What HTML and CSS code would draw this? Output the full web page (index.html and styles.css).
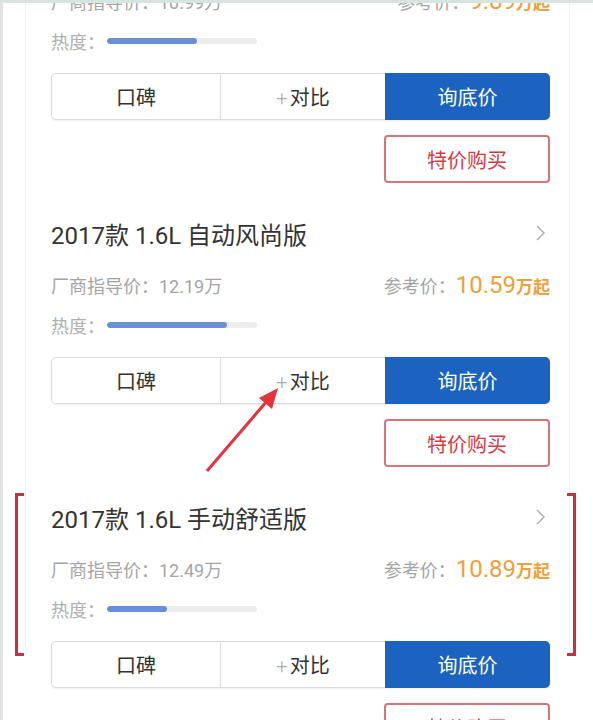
FILE: index.html
```html
<!DOCTYPE html>
<html>
<head>
    <meta charset="UTF-8">
    <meta name="viewport" content="width=device-width, initial-scale=1.0">
    <title>车型列表</title>
    <link rel="stylesheet" href="styles.css">
</head>
<body>
    <div class="page">
        <div class="car-list">
            <div class="car">
                <div class="car-title">
                    <span>2017款 1.6L 手动时尚版</span>
                    <svg class="chevron" width="12" height="18" viewBox="0 0 12 18"><polyline points="2,2 9,9 2,16" /></svg>
                </div>
                <div class="price-row">
                    <span class="guide">厂商指导价：10.99万</span>
                    <span class="ref">参考价：<b>9.89</b><em>万起</em></span>
                </div>
                <div class="heat">
                    <span>热度：</span>
                    <div class="heat-bar"><div class="heat-fill" style="width: 60%"></div></div>
                </div>
                <div class="actions">
                    <button class="act">口碑</button>
                    <button class="act"><i>+</i>对比</button>
                    <button class="act primary">询底价</button>
                </div>
                <button class="special">特价购买</button>
            </div>

            <div class="car">
                <div class="car-title">
                    <span>2017款 1.6L 自动风尚版</span>
                    <svg class="chevron" width="12" height="18" viewBox="0 0 12 18"><polyline points="2,2 9,9 2,16" /></svg>
                </div>
                <div class="price-row">
                    <span class="guide">厂商指导价：12.19万</span>
                    <span class="ref">参考价：<b>10.59</b><em>万起</em></span>
                </div>
                <div class="heat">
                    <span>热度：</span>
                    <div class="heat-bar"><div class="heat-fill" style="width: 80%"></div></div>
                </div>
                <div class="actions">
                    <button class="act">口碑</button>
                    <button class="act"><i>+</i>对比</button>
                    <button class="act primary">询底价</button>
                </div>
                <button class="special">特价购买</button>
                <!-- 指向“对比”的箭头 -->
                <svg class="arrow" width="90" height="95" viewBox="0 0 90 95">
                    <line x1="6" y1="88" x2="66" y2="18" />
                    <polygon points="77,5 71,26 58,15" />
                </svg>
            </div>

            <div class="car">
                <div class="car-title">
                    <span>2017款 1.6L 手动舒适版</span>
                    <svg class="chevron" width="12" height="18" viewBox="0 0 12 18"><polyline points="2,2 9,9 2,16" /></svg>
                </div>
                <div class="price-row">
                    <span class="guide">厂商指导价：12.49万</span>
                    <span class="ref">参考价：<b>10.89</b><em>万起</em></span>
                </div>
                <div class="heat">
                    <span>热度：</span>
                    <div class="heat-bar"><div class="heat-fill" style="width: 40%"></div></div>
                </div>
                <div class="actions">
                    <button class="act">口碑</button>
                    <button class="act"><i>+</i>对比</button>
                    <button class="act primary">询底价</button>
                </div>
                <button class="special">特价购买</button>
                <div class="bracket left"></div>
                <div class="bracket right"></div>
            </div>
        </div>
    </div>
</body>
</html>
```

FILE: styles.css
```css
* {
    margin: 0;
    padding: 0;
    box-sizing: border-box;
}

body {
    font-family: 'Roboto', 'Noto Sans CJK SC', sans-serif;
    background: #ffffff;
    border-left: 3px solid #e2e2e2;
    border-top: 3px solid #d6e5df;
    height: 720px;
    overflow: hidden;
    color: #333;
}

.page {
    margin-left: 22px;
    width: 545px;
    height: 100%;
    border-left: 1px solid #f1f1f1;
    border-right: 1px solid #f1f1f1;
    padding: 0 19px 0 25px;
}

.car-list {
    margin-top: -74px;
}

.car {
    position: relative;
    padding-bottom: 30px;
}

.car-title {
    display: flex;
    justify-content: space-between;
    align-items: center;
    height: 40px;
    font-size: 24px;
    color: #333;
}

.chevron {
    margin-right: 3px;
    fill: none;
    stroke: #b0b0b0;
    stroke-width: 1.5;
}

.price-row {
    display: flex;
    justify-content: space-between;
    align-items: baseline;
    margin-top: 12px;
    height: 40px;
    line-height: 40px;
    font-size: 18px;
    color: #a5a5a5;
}

.ref b {
    font-weight: normal;
    font-size: 24px;
    color: #f0a03a;
}

.ref em {
    font-style: normal;
    font-weight: bold;
    font-size: 17px;
    color: #f0a03a;
}

.heat {
    display: flex;
    align-items: center;
    margin-top: 10px;
    height: 20px;
    font-size: 18px;
    color: #b0b0b0;
}

.heat span {
    width: 56px;
}

.heat-bar {
    width: 150px;
    height: 6px;
    background: #ededed;
    border-radius: 3px;
    overflow: hidden;
}

.heat-fill {
    height: 100%;
    background: #6b8fd4;
    border-radius: 3px;
}

.actions {
    display: grid;
    grid-template-columns: 168px 165px 1fr;
    margin-top: 22px;
    height: 47px;
    border: 1px solid #dcdcdc;
    border-radius: 5px;
    box-shadow: 0 1px 2px rgba(0, 0, 0, 0.08);
}

.act {
    font-family: inherit;
    font-size: 20px;
    color: #333;
    background: #fff;
    border: none;
    border-left: 1px solid #dcdcdc;
}

.act:first-child {
    border-left: none;
    border-radius: 5px 0 0 5px;
}

.act i {
    font-style: normal;
    font-weight: 300;
    color: #aaa;
    margin-right: 2px;
}

.act.primary {
    background: #1c63bf;
    color: #fff;
    border-left: none;
    margin: -1px -1px -1px 0;
    border-radius: 0 5px 5px 0;
}

.special {
    display: block;
    margin: 15px 0 0 auto;
    width: 166px;
    height: 48px;
    font-family: inherit;
    font-size: 20px;
    color: #d43a45;
    background: #fff;
    border: 2px solid #d8737b;
    border-radius: 4px;
}

/* 标注 */
.arrow {
    position: absolute;
    left: 150px;
    top: 170px;
}

.arrow line {
    stroke: #e2343a;
    stroke-width: 3;
}

.arrow polygon {
    fill: #e2343a;
}

.bracket {
    position: absolute;
    top: -4px;
    width: 9px;
    height: 163px;
    border: 3px solid #c8303e;
}

.bracket.left {
    left: -36px;
    border-right: none;
}

.bracket.right {
    right: -26px;
    border-left: none;
}
```
